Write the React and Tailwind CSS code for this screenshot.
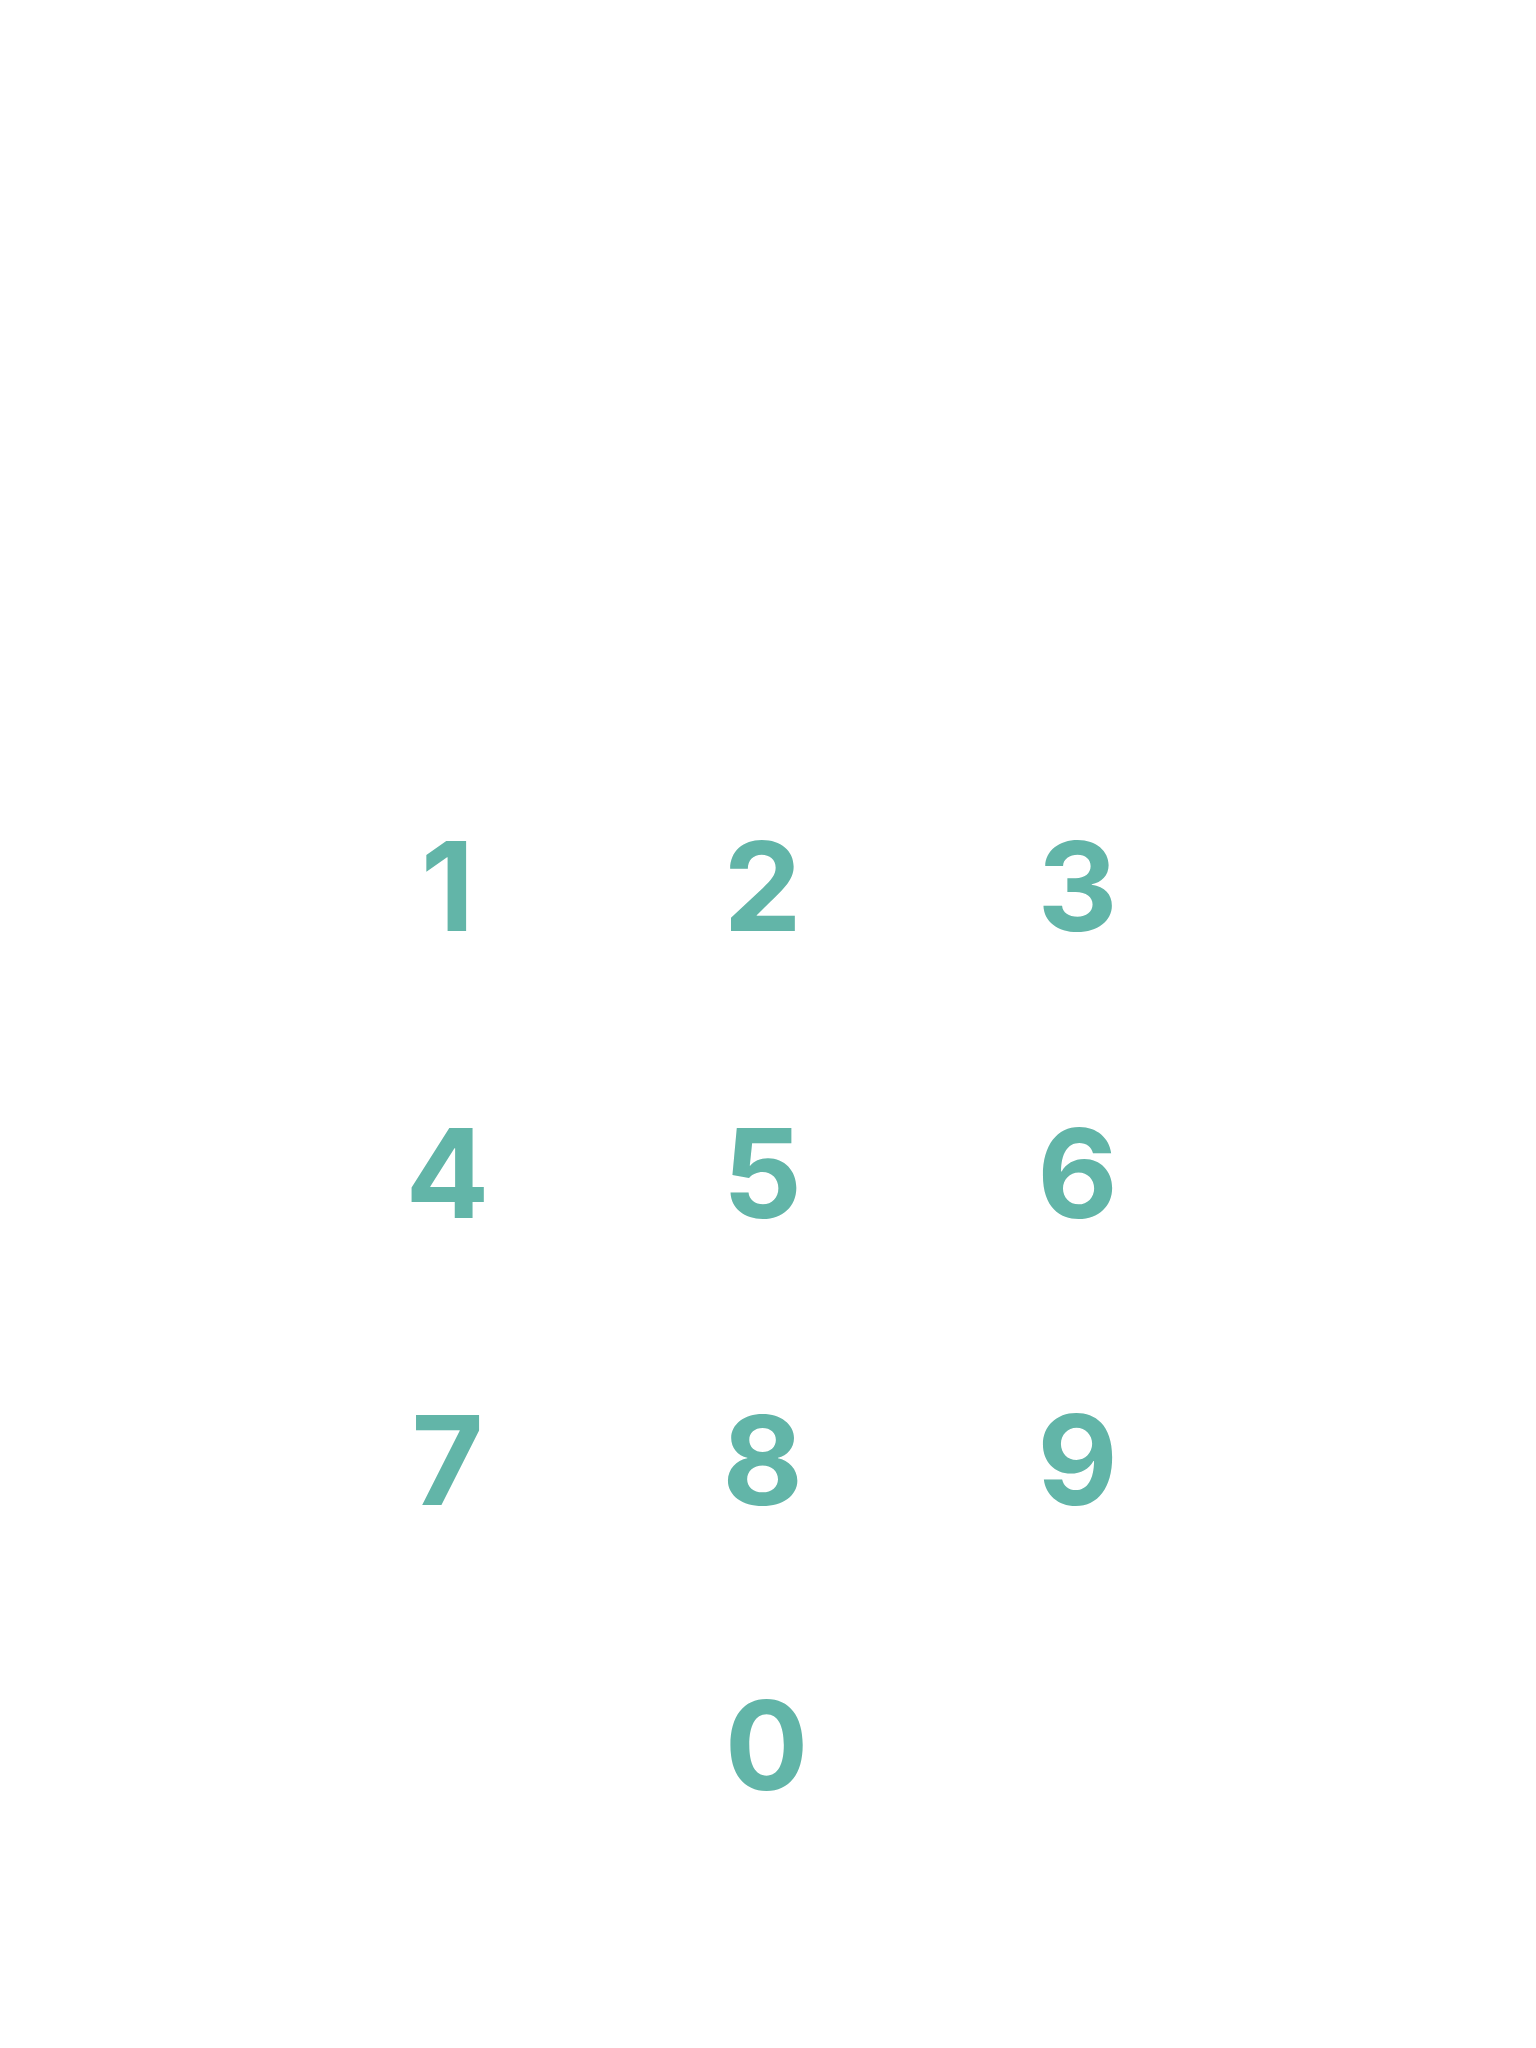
export default function App() {
  const keys = ["1", "2", "3", "4", "5", "6", "7", "8", "9"];
  return (
    <div className="min-h-[2048px] w-full bg-white" style={{ fontFamily: "Inter, 'Liberation Sans', sans-serif" }}>
      <div className="ml-[290px] w-[945px] pt-[742px]">
        <div className="grid grid-cols-3">
          {keys.map((k) => (
            <div key={k} className="flex h-[287px] items-center justify-center">
              <span className="text-[124px] font-bold leading-none text-[#62b5a8]">{k}</span>
            </div>
          ))}
          <div className="col-start-2 flex h-[283px] items-center justify-center pl-[8px]">
            <span className="text-[124px] font-bold leading-none text-[#62b5a8]">0</span>
          </div>
        </div>
      </div>
    </div>
  );
}
